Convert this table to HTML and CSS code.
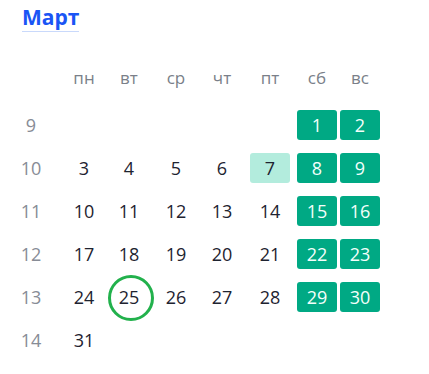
FILE: index.html
```html
<!DOCTYPE html>
<html lang="ru">
<head>
<meta charset="utf-8">
<link rel="stylesheet" href="styles.css">
</head>
<body>
<div class="month">
  <h2 class="title"><span>Март</span></h2>
  <div class="grid">
    <div class="wk"></div>
    <div class="hd">пн</div><div class="hd">вт</div><div class="hd">ср</div><div class="hd">чт</div><div class="hd">пт</div><div class="hd">сб</div><div class="hd">вс</div>

    <div class="wk">9</div>
    <div class="d"></div><div class="d"></div><div class="d"></div><div class="d"></div><div class="d"></div>
    <div class="d"><span class="c off">1</span></div><div class="d"><span class="c off">2</span></div>

    <div class="wk">10</div>
    <div class="d"><span class="c">3</span></div><div class="d"><span class="c">4</span></div><div class="d"><span class="c">5</span></div><div class="d"><span class="c">6</span></div>
    <div class="d"><span class="c pre">7</span></div>
    <div class="d"><span class="c off">8</span></div><div class="d"><span class="c off">9</span></div>

    <div class="wk">11</div>
    <div class="d"><span class="c">10</span></div><div class="d"><span class="c">11</span></div><div class="d"><span class="c">12</span></div><div class="d"><span class="c">13</span></div><div class="d"><span class="c">14</span></div>
    <div class="d"><span class="c off">15</span></div><div class="d"><span class="c off">16</span></div>

    <div class="wk">12</div>
    <div class="d"><span class="c">17</span></div><div class="d"><span class="c">18</span></div><div class="d"><span class="c">19</span></div><div class="d"><span class="c">20</span></div><div class="d"><span class="c">21</span></div>
    <div class="d"><span class="c off">22</span></div><div class="d"><span class="c off">23</span></div>

    <div class="wk">13</div>
    <div class="d"><span class="c">24</span></div><div class="d"><span class="c today">25</span></div><div class="d"><span class="c">26</span></div><div class="d"><span class="c">27</span></div><div class="d"><span class="c">28</span></div>
    <div class="d"><span class="c off">29</span></div><div class="d"><span class="c off">30</span></div>

    <div class="wk">14</div>
    <div class="d"><span class="c">31</span></div>
  </div>
</div>
</body>
</html>
```
FILE: styles.css
```css
html, body {
  margin: 0;
  padding: 0;
  background: #ffffff;
}
body {
  font-family: "Open Sans", "Noto Sans", sans-serif;
  color: #1e2330;
}
.month {
  width: 429px;
}
.title {
  margin: 0;
  padding: 3px 0 0 22px;
  height: 57px;
  box-sizing: border-box;
  font-size: 21px;
  font-weight: 700;
  line-height: 28px;
  color: #1a55f5;
}
.title span {
  display: inline-block;
  border-bottom: 1px solid #c9d9fb;
  line-height: 27px;
}
.grid {
  display: grid;
  grid-template-columns: 62px 44px 46px 48px 44px 52px 42px 44px;
  grid-template-rows: 46px;
  grid-auto-rows: 43px;
  align-items: center;
  justify-items: center;
}
.wk {
  font-size: 18px;
  color: #878c96;
}
.hd {
  font-size: 17px;
  color: #7a7f89;
  padding-bottom: 5px;
}
.d {
  width: 100%;
  display: flex;
  justify-content: center;
}
.c {
  width: 40px;
  height: 30px;
  line-height: 30px;
  text-align: center;
  font-size: 18px;
  border-radius: 3px;
  position: relative;
}
.off {
  background: #00a984;
  color: #f4fffb;
}
.pre {
  background: #b3ecdd;
}
.today::after {
  content: "";
  position: absolute;
  left: 50%;
  top: 50%;
  width: 40px;
  height: 40px;
  margin: -22px 0 0 -21px;
  border: 3px solid #22b14c;
  border-radius: 50%;
}
```
